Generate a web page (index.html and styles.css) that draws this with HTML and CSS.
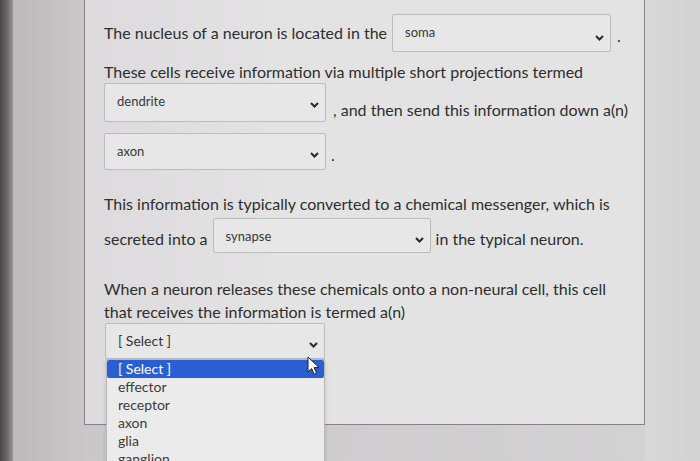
FILE: index.html
```html
<!DOCTYPE html>
<html lang="en">
<head>
  <title>Quiz — Neurons</title>
  <link rel="stylesheet" href="styles.css">
</head>
<body>
  <div class="screen">
    <div class="bezel"></div>
    <div class="gutter"></div>

    <div class="column">
      <div class="question">
        <div class="line row-soma">
          <span class="txt">The nucleus of a neuron is located in the</span>
          <div class="pick pick-soma">
            <span class="pick-val">soma</span>
            <svg class="chev" width="9" height="6" viewBox="0 0 9 6"><path d="M1 1l3.5 3.5L8 1"/></svg>
          </div>
          <span class="txt dot">.</span>
        </div>

        <p class="para para-cells">These cells receive information via multiple short projections termed</p>

        <div class="line row-dendrite">
          <div class="pick">
            <span class="pick-val">dendrite</span>
            <svg class="chev" width="9" height="6" viewBox="0 0 9 6"><path d="M1 1l3.5 3.5L8 1"/></svg>
          </div>
          <span class="txt after">, and then send this information down a(n)</span>
        </div>

        <div class="line row-axon">
          <div class="pick">
            <span class="pick-val">axon</span>
            <svg class="chev" width="9" height="6" viewBox="0 0 9 6"><path d="M1 1l3.5 3.5L8 1"/></svg>
          </div>
          <span class="txt dot">.</span>
        </div>

        <p class="para para-info">This information is typically converted to a chemical messenger, which is</p>

        <div class="line row-synapse">
          <span class="txt">secreted into a</span>
          <div class="pick pick-synapse">
            <span class="pick-val">synapse</span>
            <svg class="chev" width="9" height="6" viewBox="0 0 9 6"><path d="M1 1l3.5 3.5L8 1"/></svg>
          </div>
          <span class="txt">in the typical neuron.</span>
        </div>

        <p class="para para-when">When a neuron releases these chemicals onto a non-neural cell, this cell<br>that receives the information is termed a(n)</p>

        <div class="line row-select">
          <div class="pick pick-open">
            <span class="pick-val">[ Select ]</span>
            <svg class="chev" width="9" height="6" viewBox="0 0 9 6"><path d="M1 1l3.5 3.5L8 1"/></svg>

            <ul class="options">
              <li class="active">[ Select ]</li>
              <li>effector</li>
              <li>receptor</li>
              <li>axon</li>
              <li>glia</li>
              <li>ganglion</li>
            </ul>

            <svg class="cursor" width="13" height="19" viewBox="0 0 13 19">
              <path d="M1 1v15l3.6-3.4 2.6 5.6 2.4-1.1-2.6-5.5H12z"/>
            </svg>
          </div>
        </div>
      </div>
      <div class="below"></div>
    </div>

    <div class="outside"></div>
  </div>
</body>
</html>
```

FILE: styles.css
```css
body {
  margin: 0;
  font-family: Lato, 'Open Sans', sans-serif;
  color: #2e2e2e;
  background: #d4d3d4;
  overflow: hidden;
}

.screen {
  display: flex;
  height: 461px;
}

.bezel {
  width: 13px;
  background: linear-gradient(90deg, #4a4546, #6f6a6b 60%, #9c9798);
}

.gutter {
  width: 71px;
  background: linear-gradient(90deg, #bdb8ba, #cbc7c9);
}

.column {
  width: 561px;
  display: flex;
  flex-direction: column;
}

.question {
  height: 425px;
  box-sizing: border-box;
  border: 1px solid #858385;
  border-top: none;
  padding: 0 0 0 19px;
  background: linear-gradient(90deg, #dcdadc, #e4e3e4 35%, #e3e3e3);
}

.below {
  flex: 1;
  background: linear-gradient(90deg, #cac7c9, #d3d2d3);
}

.outside {
  flex: 1;
  background: linear-gradient(90deg, #d8d8d8, #d2d2d2);
}

.line {
  display: flex;
  align-items: flex-end;
}

.txt {
  font-size: 16px;
  line-height: 22px;
  white-space: nowrap;
}

.para {
  margin: 0;
  font-size: 16px;
  line-height: 22px;
  white-space: nowrap;
}

/* vertical rhythm, measured from the panel top */
.row-soma { margin-top: 14px; }
.row-soma .txt { margin-bottom: 8px; }
.row-soma .dot { margin-bottom: 5px; margin-left: 6px; }

.para-cells { margin-top: 9px; }

.row-dendrite .after { margin-bottom: 1px; margin-left: 7px; }

.row-axon { margin-top: 11px; }
.row-axon .dot { margin-bottom: 4px; margin-left: 5px; }
.row-axon .pick { height: 37px; }

.para-info { margin-top: 23px; }

.row-synapse { margin-top: 3px; }
.row-synapse .txt { margin-bottom: 3px; }
.row-synapse .pick { height: 35px; margin: 0 5px; }

.para-when { margin-top: 24px; line-height: 23px; }

.row-select .pick { height: 36px; margin-left: 1px; }

.pick {
  position: relative;
  box-sizing: border-box;
  width: 222px;
  height: 39px;
  display: flex;
  justify-content: space-between;
  align-items: flex-start;
  padding: 0 6px 0 12px;
  border: 1px solid #bcbbbd;
  border-radius: 2px;
  background: #e7e7e7;
}

.pick-soma {
  width: 219px;
  height: 38px;
  margin-left: 5px;
}

.pick-synapse { width: 218px; }

.pick-open { width: 220px; }

.pick-val {
  margin-top: 9px;
  font-size: 13px;
  line-height: 16px;
  color: #383838;
}

.pick-open .pick-val {
  font-size: 14px;
  color: #333;
}

.chev {
  margin-top: 18px;
  fill: none;
  stroke: #2a2a2a;
  stroke-width: 2;
}

.pick-soma .chev { margin-top: 20px; }

.options {
  position: absolute;
  top: 35px;
  left: 0;
  width: 217px;
  margin: 0;
  padding: 0;
  list-style: none;
  background: #ebebeb;
  border: 1px solid #b9b9b9;
  box-shadow: 0 2px 4px rgba(0, 0, 0, 0.15);
}

.options li {
  height: 18px;
  line-height: 18px;
  padding-left: 11px;
  font-size: 14px;
  color: #3c3c3c;
}

.options .active {
  background: #2a5fd3;
  color: #fff;
  border-radius: 2px;
}

.cursor {
  position: absolute;
  left: 201px;
  top: 32px;
  fill: #fff;
  stroke: #222;
  stroke-width: 1;
}
```
